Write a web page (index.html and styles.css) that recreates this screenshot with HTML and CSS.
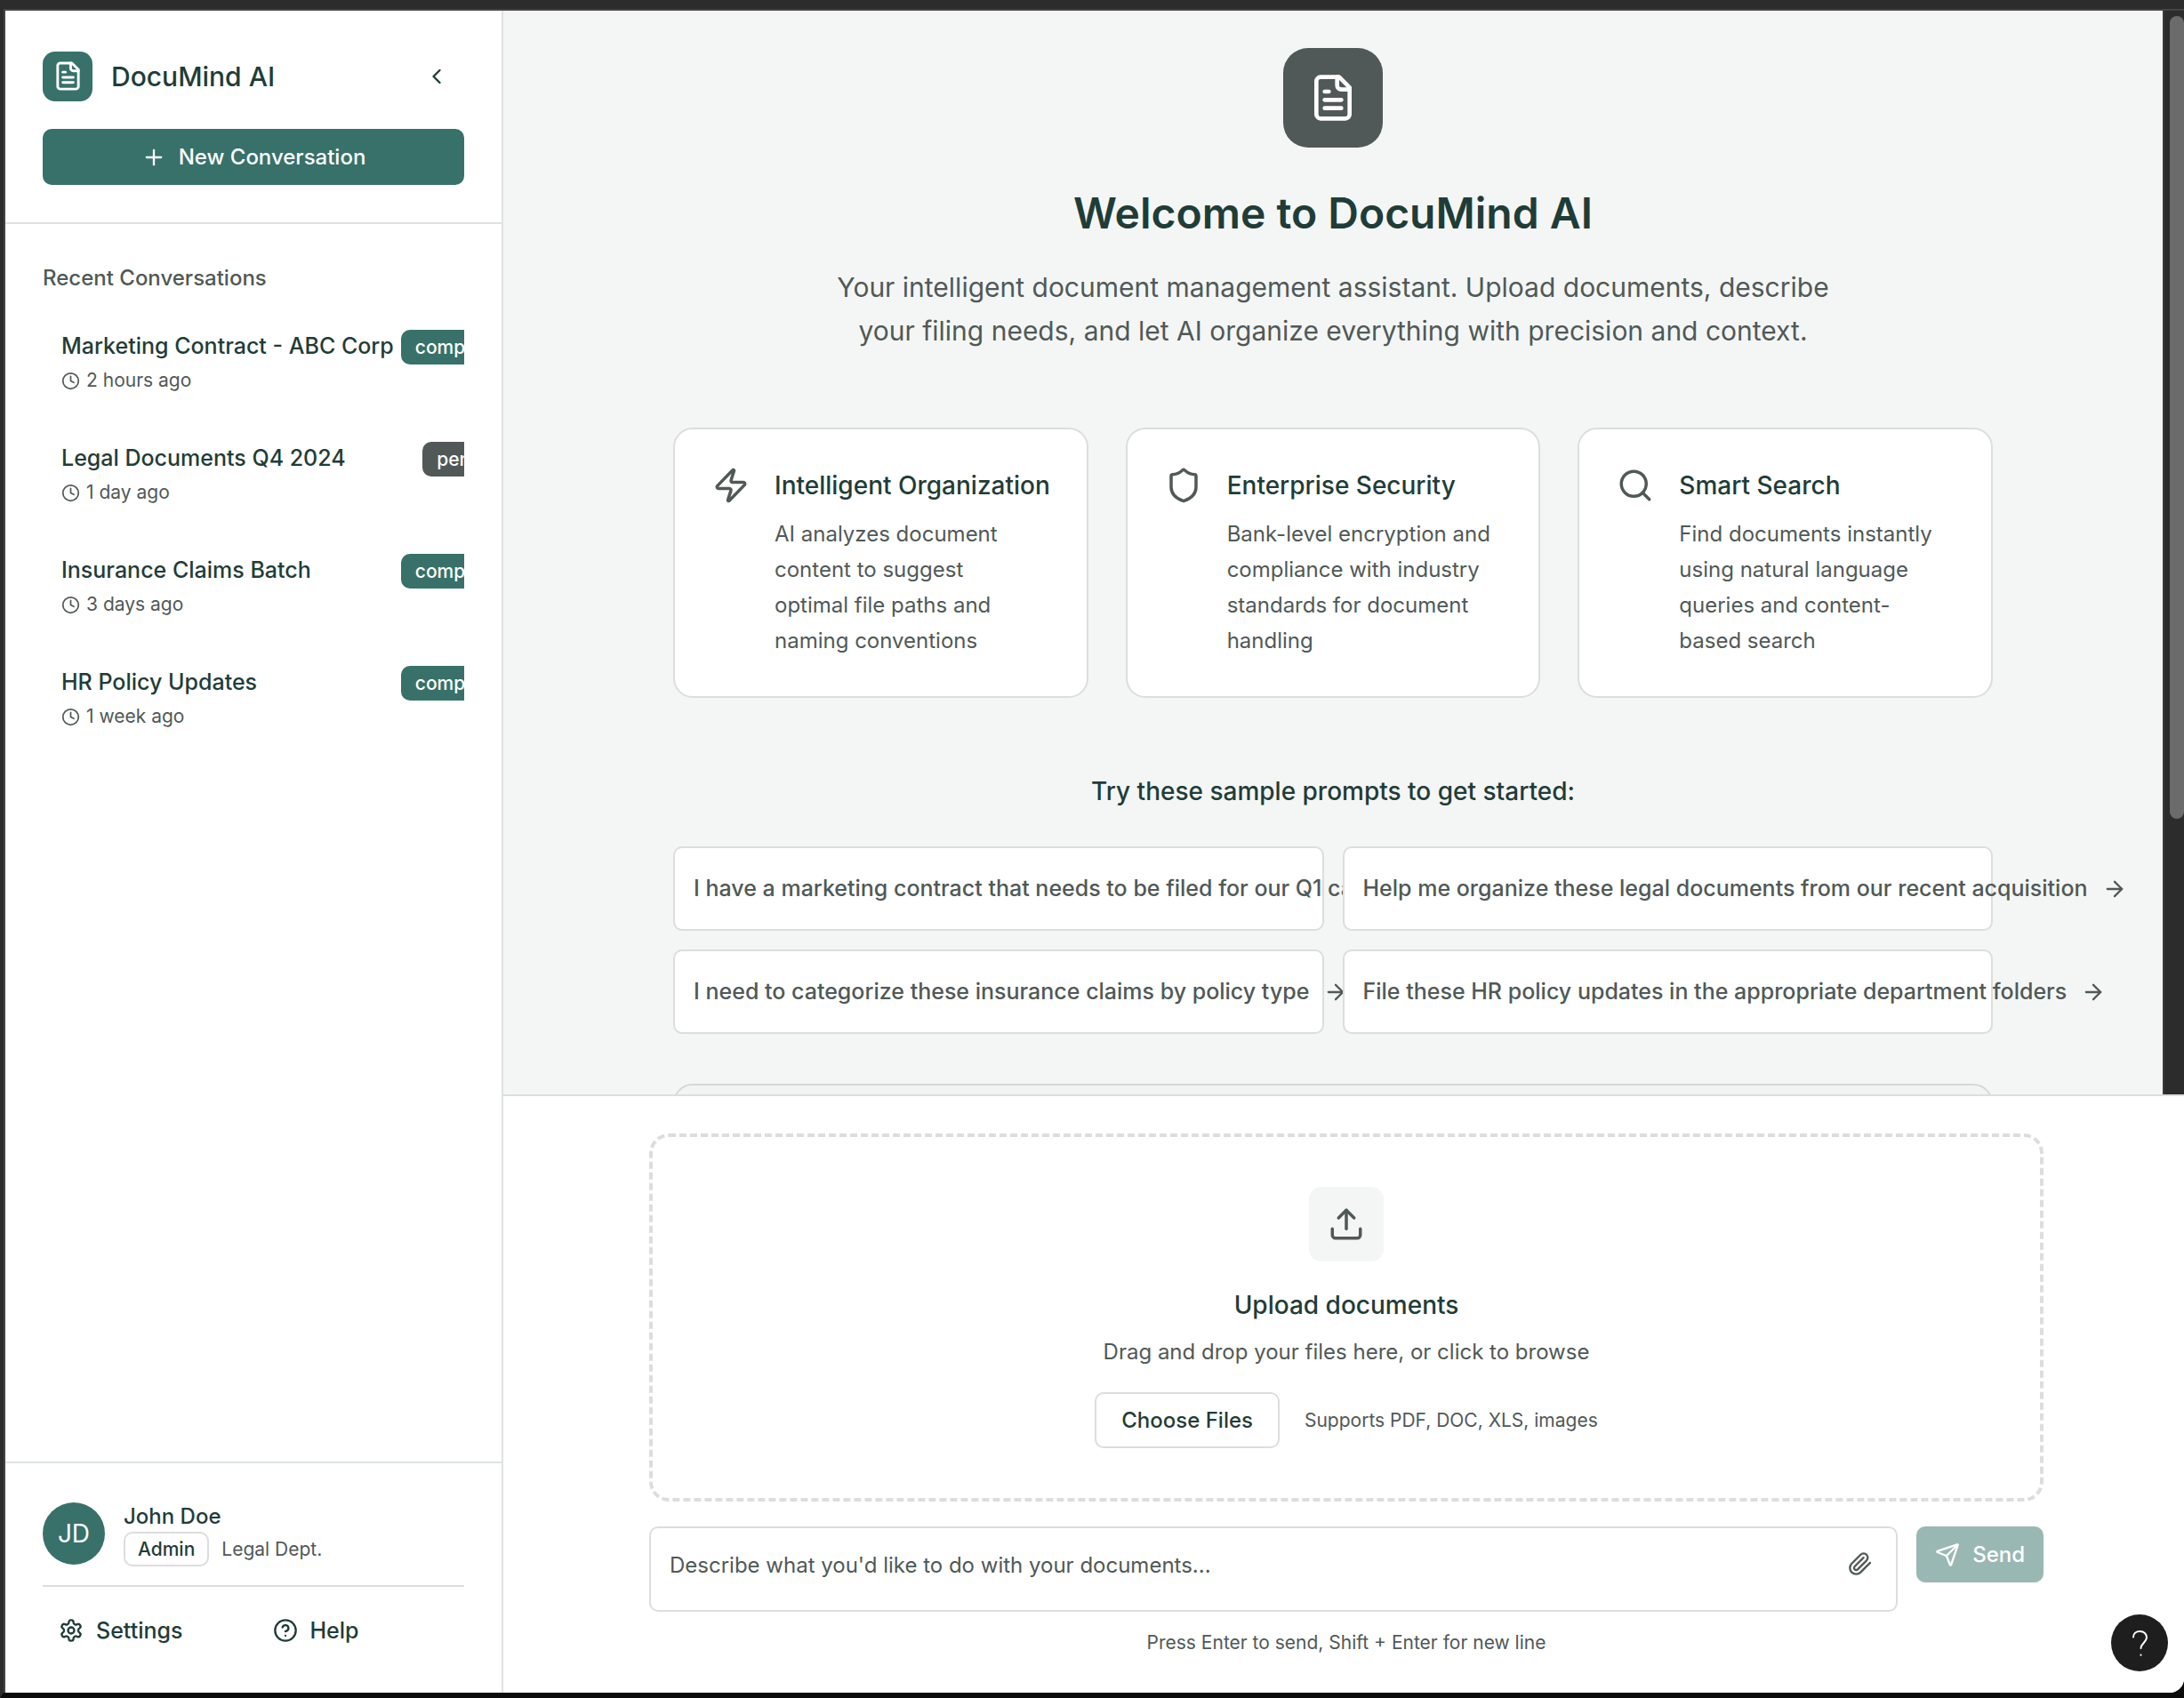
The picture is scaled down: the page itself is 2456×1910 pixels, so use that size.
FILE: index.html
```html
<!DOCTYPE html>
<html lang="en">
<head>
<meta charset="utf-8">
<title>DocuMind AI</title>
<meta name="viewport" content="width=device-width, initial-scale=1">
<link rel="stylesheet" href="styles.css">
</head>
<body>
<svg class="sprite" aria-hidden="true">
  <symbol id="file-text" viewBox="0 0 24 24"><path d="M15 2H6a2 2 0 0 0-2 2v16a2 2 0 0 0 2 2h12a2 2 0 0 0 2-2V7Z"/><path d="M14 2v4a2 2 0 0 0 2 2h4"/><path d="M10 9H8"/><path d="M16 13H8"/><path d="M16 17H8"/></symbol>
  <symbol id="chevron-left" viewBox="0 0 24 24"><path d="m15 18-6-6 6-6"/></symbol>
  <symbol id="plus" viewBox="0 0 24 24"><path d="M5 12h14"/><path d="M12 5v14"/></symbol>
  <symbol id="clock" viewBox="0 0 24 24"><circle cx="12" cy="12" r="10"/><path d="M12 6v6l4 2"/></symbol>
  <symbol id="settings" viewBox="0 0 24 24"><path d="M12.22 2h-.44a2 2 0 0 0-2 2v.18a2 2 0 0 1-1 1.73l-.43.25a2 2 0 0 1-2 0l-.15-.08a2 2 0 0 0-2.73.73l-.22.38a2 2 0 0 0 .73 2.73l.15.1a2 2 0 0 1 1 1.72v.51a2 2 0 0 1-1 1.74l-.15.09a2 2 0 0 0-.73 2.73l.22.38a2 2 0 0 0 2.73.73l.15-.08a2 2 0 0 1 2 0l.43.25a2 2 0 0 1 1 1.73V20a2 2 0 0 0 2 2h.44a2 2 0 0 0 2-2v-.18a2 2 0 0 1 1-1.73l.43-.25a2 2 0 0 1 2 0l.15.08a2 2 0 0 0 2.73-.73l.22-.39a2 2 0 0 0-.73-2.73l-.15-.08a2 2 0 0 1-1-1.74v-.5a2 2 0 0 1 1-1.74l.15-.09a2 2 0 0 0 .73-2.73l-.22-.38a2 2 0 0 0-2.73-.73l-.15.08a2 2 0 0 1-2 0l-.43-.25a2 2 0 0 1-1-1.73V4a2 2 0 0 0-2-2z"/><circle cx="12" cy="12" r="3"/></symbol>
  <symbol id="help" viewBox="0 0 24 24"><circle cx="12" cy="12" r="10"/><path d="M9.09 9a3 3 0 0 1 5.83 1c0 2-3 3-3 3"/><path d="M12 17h.01"/></symbol>
  <symbol id="zap" viewBox="0 0 24 24"><path d="M4 14a1 1 0 0 1-.78-1.63l9.9-10.2a.5.5 0 0 1 .86.46l-1.92 6.02A1 1 0 0 0 13 10h7a1 1 0 0 1 .78 1.63l-9.9 10.2a.5.5 0 0 1-.86-.46l1.92-6.02A1 1 0 0 0 11 14z"/></symbol>
  <symbol id="shield" viewBox="0 0 24 24"><path d="M20 13c0 5-3.5 7.5-7.66 8.95a1 1 0 0 1-.67-.01C7.5 20.5 4 18 4 13V6a1 1 0 0 1 1-1c2 0 4.5-1.2 6.24-2.72a1.17 1.17 0 0 1 1.52 0C14.51 3.81 17 5 19 5a1 1 0 0 1 1 1z"/></symbol>
  <symbol id="search" viewBox="0 0 24 24"><circle cx="11" cy="11" r="8"/><path d="m21 21-4.3-4.3"/></symbol>
  <symbol id="arrow-right" viewBox="0 0 24 24"><path d="M5 12h14"/><path d="m12 5 7 7-7 7"/></symbol>
  <symbol id="upload" viewBox="0 0 24 24"><path d="M12 3v12"/><path d="m17 8-5-5-5 5"/><path d="M21 15v4a2 2 0 0 1-2 2H5a2 2 0 0 1-2-2v-4"/></symbol>
  <symbol id="paperclip" viewBox="0 0 24 24"><path d="m21.44 11.05-9.19 9.19a6 6 0 0 1-8.49-8.49l8.57-8.57A4 4 0 1 1 18 8.84l-8.59 8.57a2 2 0 0 1-2.83-2.83l8.49-8.48"/></symbol>
  <symbol id="send" viewBox="0 0 24 24"><path d="M14.536 21.686a.5.5 0 0 0 .937-.024l6.5-19a.496.496 0 0 0-.635-.635l-19 6.5a.5.5 0 0 0-.024.937l7.93 3.18a2 2 0 0 1 1.112 1.11z"/><path d="m21.854 2.147-10.94 10.939"/></symbol>
  <symbol id="question" viewBox="0 0 32 32"><path d="M9 9.500C9 5.500 12 3 16.500 3s7.500 3 7.500 7c0 5.500-6.500 6.500-6.500 12"/><path d="M17.500 29.500v.2"/></symbol>
</svg>

<div class="app">
  <aside class="sidebar">
    <header class="sidebar-head">
      <div class="brand-row">
        <div class="brand">
          <span class="brand-logo"><svg class="icon icon-md"><use href="#file-text"/></svg></span>
          <span class="brand-name">DocuMind AI</span>
        </div>
        <button class="collapse" type="button" aria-label="Collapse sidebar"><svg class="icon"><use href="#chevron-left"/></svg></button>
      </div>
      <button class="btn btn-primary" type="button"><svg class="icon"><use href="#plus"/></svg>New Conversation</button>
    </header>

    <nav class="recent" aria-labelledby="recent-title">
      <h2 class="recent-title" id="recent-title">Recent Conversations</h2>
      <div class="recent-clip">
        <ul class="recent-list">
          <li><a class="conv" href="#c1">
            <span class="conv-name">Marketing Contract - ABC Corp</span><span class="badge badge-done">completed</span>
            <span class="conv-time"><svg class="icon icon-sm"><use href="#clock"/></svg>2 hours ago</span></a></li>
          <li><a class="conv" href="#c2">
            <span class="conv-name">Legal Documents Q4 2024</span><span class="badge badge-pending">pending</span>
            <span class="conv-time"><svg class="icon icon-sm"><use href="#clock"/></svg>1 day ago</span></a></li>
          <li><a class="conv" href="#c3">
            <span class="conv-name">Insurance Claims Batch</span><span class="badge badge-done">completed</span>
            <span class="conv-time"><svg class="icon icon-sm"><use href="#clock"/></svg>3 days ago</span></a></li>
          <li><a class="conv" href="#c4">
            <span class="conv-name">HR Policy Updates</span><span class="badge badge-done">completed</span>
            <span class="conv-time"><svg class="icon icon-sm"><use href="#clock"/></svg>1 week ago</span></a></li>
        </ul>
      </div>
    </nav>

    <footer class="sidebar-foot">
      <div class="user">
        <span class="avatar">JD</span>
        <div class="user-info">
          <span class="user-name">John Doe</span>
          <div class="user-meta"><span class="badge badge-outline">Admin</span><span class="dept">Legal Dept.</span></div>
        </div>
      </div>
      <hr class="rule">
      <div class="foot-links">
        <button class="ghost" type="button"><svg class="icon"><use href="#settings"/></svg>Settings</button>
        <button class="ghost" type="button"><svg class="icon"><use href="#help"/></svg>Help</button>
      </div>
    </footer>
  </aside>

  <main class="main">
    <div class="scroll">
      <section class="welcome">
        <span class="hero-logo"><svg class="icon icon-xl"><use href="#file-text"/></svg></span>
        <h1 class="hero-title">Welcome to DocuMind AI</h1>
        <p class="hero-text">Your intelligent document management assistant. Upload documents, describe your filing needs, and let AI organize everything with precision and context.</p>

        <div class="features">
          <article class="feature">
            <svg class="icon icon-lg"><use href="#zap"/></svg>
            <div><h2 class="feature-title">Intelligent Organization</h2>
            <p class="feature-text">AI analyzes document content to suggest optimal file paths and naming conventions</p></div>
          </article>
          <article class="feature">
            <svg class="icon icon-lg"><use href="#shield"/></svg>
            <div><h2 class="feature-title">Enterprise Security</h2>
            <p class="feature-text">Bank-level encryption and compliance with industry standards for document handling</p></div>
          </article>
          <article class="feature">
            <svg class="icon icon-lg"><use href="#search"/></svg>
            <div><h2 class="feature-title">Smart Search</h2>
            <p class="feature-text">Find documents instantly using natural language queries and content-based search</p></div>
          </article>
        </div>

        <h2 class="prompts-title">Try these sample prompts to get started:</h2>
        <div class="prompts">
          <button class="prompt" type="button"><span>I have a marketing contract that needs to be filed for our Q1 campaign</span><svg class="icon"><use href="#arrow-right"/></svg></button>
          <button class="prompt" type="button"><span>Help me organize these legal documents from our recent acquisition</span><svg class="icon"><use href="#arrow-right"/></svg></button>
          <button class="prompt" type="button"><span>I need to categorize these insurance claims by policy type</span><svg class="icon"><use href="#arrow-right"/></svg></button>
          <button class="prompt" type="button"><span>File these HR policy updates in the appropriate department folders</span><svg class="icon"><use href="#arrow-right"/></svg></button>
        </div>
        <div class="next-card"></div>
      </section>
      <div class="track"><div class="thumb"></div></div>
    </div>

    <section class="composer">
      <div class="composer-inner">
        <div class="dropzone">
          <span class="drop-tile"><svg class="icon icon-lg"><use href="#upload"/></svg></span>
          <h2 class="drop-title">Upload documents</h2>
          <p class="drop-text">Drag and drop your files here, or click to browse</p>
          <div class="drop-actions">
            <button class="btn btn-outline" type="button">Choose Files</button>
            <span class="note">Supports PDF, DOC, XLS, images</span>
          </div>
        </div>
        <form class="ask">
          <div class="field">
            <textarea class="field-input" rows="1" aria-label="Message" placeholder="Describe what you'd like to do with your documents..."></textarea>
            <button class="attach" type="button" aria-label="Attach file"><svg class="icon"><use href="#paperclip"/></svg></button>
          </div>
          <button class="btn btn-send" type="submit" disabled><svg class="icon"><use href="#send"/></svg>Send</button>
        </form>
        <p class="note hint">Press Enter to send, Shift + Enter for new line</p>
      </div>
    </section>
  </main>
  <button class="fab" type="button" aria-label="Help"><svg class="icon icon-fab"><use href="#question"/></svg></button>
</div>
</body>
</html>
```

FILE: styles.css
```css
:root {
  --ink: #1f3d38;
  --muted: #505957;
  --green: #37716a;
  --line: #dcdddd;
  --line-cool: #dee3e2;
  --soft: #f4f6f5;
  --frame: #2c2c2c;
  --frame-edge: #444444;
}

* { box-sizing: border-box; }

body {
  margin: 0;
  height: 100vh;
  overflow: hidden;
  border-top: 10px solid var(--frame);
  border-left: 4px solid var(--frame);
  border-bottom: 6px solid #0b0b0b;
  background: #0b0b0b;
  font: 400 24px/35px Inter, "Liberation Sans", sans-serif;
  color: var(--ink);
}

h1, h2, p, ul { margin: 0; padding: 0; }
ul { list-style: none; }
a { color: inherit; text-decoration: none; }
button, textarea { font: inherit; color: inherit; }
button { border: 0; background: none; padding: 0; cursor: pointer; }

.sprite { position: absolute; width: 0; height: 0; }

.icon {
  flex: none;
  width: 28px;
  height: 28px;
  fill: none;
  stroke: currentColor;
  stroke-width: 2;
  stroke-linecap: round;
  stroke-linejoin: round;
}
.icon-sm { width: 21px; height: 21px; }
.icon-md { width: 35px; height: 35px; }
.icon-lg { width: 42px; height: 42px; }
.icon-xl { width: 56px; height: 56px; }
.icon-fab { width: 32px; height: 32px; }

.app {
  position: relative;
  display: flex;
  height: 100%;
  border-top: 2px solid var(--frame-edge);
  border-left: 2px solid var(--frame-edge);
  border-bottom-right-radius: 16px;
  overflow: hidden;
  background: #ffffff;
}

/* Buttons and badges */
.btn {
  display: flex;
  align-items: center;
  justify-content: center;
  gap: 14px;
  height: 63px;
  border-radius: 10px;
  font-weight: 500;
  white-space: nowrap;
}
.btn-primary { width: 100%; background: var(--green); color: #ffffff; }
.btn-outline { padding: 0 28px; border: 2px solid var(--line); background: #ffffff; }
.btn-send { padding: 0 21px; background: #9ab8b3; color: #ffffff; }

.badge {
  display: flex;
  align-items: center;
  height: 39px;
  padding: 0 16px;
  border-radius: 10px;
  font-size: 21px;
  line-height: 28px;
  font-weight: 500;
  white-space: nowrap;
}
.badge-done { background: var(--green); color: #ffffff; }
.badge-pending { background: var(--muted); color: #ffffff; }
.badge-outline { padding: 0 14px; border: 2px solid var(--line); }

/* Sidebar */
.sidebar {
  flex: none;
  display: flex;
  flex-direction: column;
  width: 560px;
  border-right: 2px solid var(--line-cool);
}
.sidebar-head {
  display: flex;
  flex-direction: column;
  gap: 28px;
  padding: 42px;
  border-bottom: 2px solid var(--line-cool);
}
.brand-row { display: flex; align-items: center; justify-content: space-between; height: 63px; }
.brand { display: flex; align-items: center; gap: 21px; }
.brand-logo {
  display: grid;
  place-items: center;
  width: 56px;
  height: 56px;
  border-radius: 14px;
  background: var(--green);
  color: #ffffff;
}
.brand-name { font-size: 30px; line-height: 42px; font-weight: 500; }
.collapse { display: grid; place-items: center; width: 63px; height: 63px; }

.recent { flex: 1; padding: 42px; }
.recent-title { font-size: 24px; line-height: 37px; font-weight: 500; color: var(--muted); }
.recent-clip { overflow: hidden; margin-top: 19px; }
.recent-list { display: grid; gap: 13px; width: max-content; min-width: 100%; }
.conv {
  display: grid;
  grid-template-columns: 1fr auto;
  align-items: start;
  column-gap: 8px;
  row-gap: 4px;
  padding: 21px;
}
.conv-name { font-size: 25px; line-height: 37px; font-weight: 500; white-space: nowrap; }
.conv-time {
  display: flex;
  align-items: center;
  gap: 7px;
  font-size: 21px;
  line-height: 28px;
  color: var(--muted);
}

.sidebar-foot { padding: 42px; border-top: 2px solid var(--line-cool); }
.user { display: flex; align-items: center; gap: 21px; }
.avatar {
  display: grid;
  place-items: center;
  width: 70px;
  height: 70px;
  border-radius: 50%;
  background: var(--green);
  color: #ffffff;
  font-size: 28px;
}
.user-name { display: block; font-weight: 500; }
.user-meta { display: flex; align-items: center; gap: 14px; }
.dept, .note { font-size: 21px; line-height: 28px; color: var(--muted); }
.rule { height: 2px; margin: 21px 0; border: 0; background: var(--line); }
.foot-links { display: grid; grid-template-columns: 1fr 1fr; gap: 7px; }
.ghost {
  display: flex;
  align-items: center;
  gap: 14px;
  height: 56px;
  padding: 0 18px;
  font-size: 25px;
  font-weight: 500;
}

/* Welcome area */
.main { flex: 1; min-width: 0; display: flex; flex-direction: column; }
.scroll { flex: 1; min-height: 0; display: flex; overflow: hidden; background: var(--soft); }
.welcome {
  flex: 1;
  min-width: 0;
  display: flex;
  flex-direction: column;
  align-items: center;
  max-width: 1568px;
  height: max-content;
  margin: 0 auto;
  padding: 42px;
}
.track { flex: none; width: 24px; padding: 6px 0 0 6px; border-left: 2px solid #3a3a3a; background: var(--frame); }
.thumb { height: 903px; border-radius: 8px; background: #6b6b6b; }

.hero-logo {
  display: grid;
  place-items: center;
  width: 112px;
  height: 112px;
  border-radius: 28px;
  background: var(--muted);
  color: #ffffff;
}
.hero-title { margin-top: 42px; font-size: 48px; line-height: 63px; font-weight: 600; }
.hero-text {
  max-width: 1176px;
  margin-top: 28px;
  font-size: 30px;
  line-height: 49px;
  text-align: center;
  color: var(--muted);
}

.features { display: grid; grid-template-columns: repeat(3, minmax(0, 1fr)); gap: 42px; width: 100%; margin-top: 84px; }
.feature {
  display: flex;
  gap: 28px;
  padding: 42px;
  border: 2px solid var(--line);
  border-radius: 22px;
  background: #ffffff;
  color: var(--muted);
}
.feature-title { font-size: 28px; line-height: 42px; font-weight: 500; color: var(--ink); white-space: nowrap; }
.feature-text { margin-top: 14px; padding-right: 10px; line-height: 40px; }

.prompts-title { margin-top: 84px; font-size: 28px; line-height: 42px; font-weight: 500; }
.prompts { display: grid; grid-template-columns: repeat(2, minmax(0, 1fr)); gap: 21px; width: 100%; margin-top: 41px; }
.prompt {
  position: relative;
  display: flex;
  align-items: center;
  gap: 16px;
  height: 95px;
  padding: 0 21px;
  border: 2px solid var(--line);
  border-radius: 10px;
  background: #ffffff;
  color: var(--muted);
  font-size: 25px;
  font-weight: 500;
  white-space: nowrap;
}
.next-card {
  width: 100%;
  height: 160px;
  margin-top: 56px;
  border: 2px solid #d5d8d7;
  border-radius: 22px;
  background: #f2f4f3;
}

/* Composer */
.composer { padding: 42px 36px 42px 42px; border-top: 2px solid var(--line); background: #ffffff; }
.composer-inner { max-width: 1568px; margin: 0 auto; }
.dropzone {
  display: flex;
  flex-direction: column;
  align-items: center;
  padding: 56px;
  border: 4px dashed var(--line);
  border-radius: 22px;
}
.drop-tile {
  display: grid;
  place-items: center;
  width: 84px;
  height: 84px;
  border-radius: 14px;
  background: var(--soft);
  color: var(--muted);
}
.drop-title { margin-top: 28px; font-size: 28px; line-height: 42px; font-weight: 500; }
.drop-text { margin-top: 14px; color: var(--muted); }
.drop-actions { display: flex; align-items: center; gap: 28px; margin-top: 28px; }

.ask { display: flex; align-items: flex-start; gap: 21px; margin-top: 28px; }
.field {
  flex: 1;
  display: flex;
  align-items: flex-start;
  gap: 14px;
  height: 96px;
  padding: 24px 26px 24px 21px;
  border: 2px solid var(--line);
  border-radius: 10px;
}
.field-input {
  flex: 1;
  height: 35px;
  padding: 0;
  border: 0;
  outline: 0;
  resize: none;
  background: none;
  overflow: hidden;
}
.field-input::placeholder { color: var(--muted); opacity: 1; }
.attach { display: grid; place-items: center; height: 32px; color: var(--muted); }
.hint { margin-top: 21px; text-align: center; }

.fab {
  position: absolute;
  right: 18px;
  bottom: 24px;
  display: grid;
  place-items: center;
  width: 64px;
  height: 64px;
  border-radius: 50%;
  background: #1e1e1e;
  color: #ffffff;
}
```
